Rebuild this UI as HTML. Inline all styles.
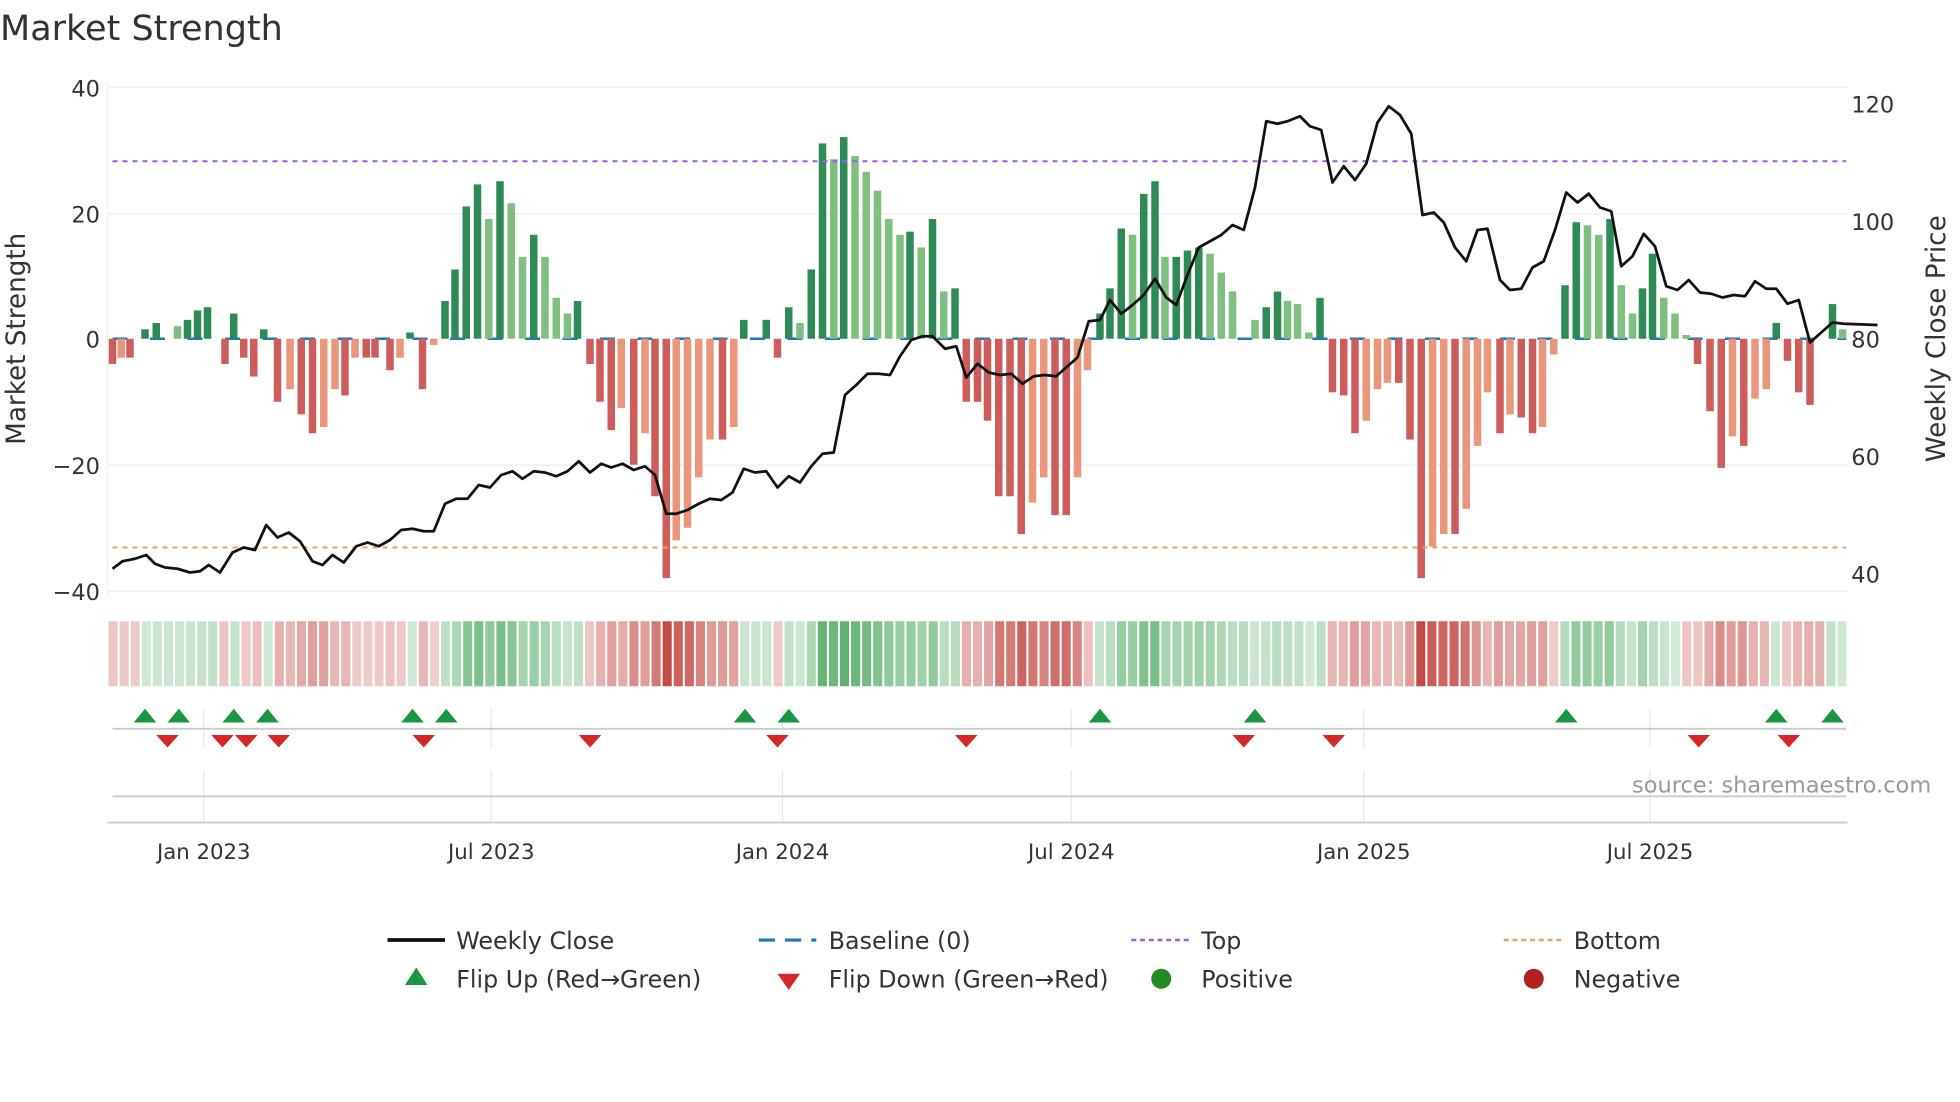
<!DOCTYPE html>
<html><head><meta charset="utf-8"><style>
html,body{margin:0;padding:0;background:#fff;width:1960px;height:1102px;overflow:hidden}
svg{display:block}
text{font-family:"DejaVu Sans","Liberation Sans",sans-serif;fill:#333}
</style></head><body>
<svg id="s" width="1960" height="1102" viewBox="0 0 1568 881.6" xmlns="http://www.w3.org/2000/svg">
<text x="0" y="32" font-size="28">Market Strength</text>
<g stroke="#eee" stroke-width="1">
<line x1="86" y1="70" x2="1478" y2="70"/><line x1="86" y1="171" x2="1478" y2="171"/>
<line x1="86" y1="372" x2="1478" y2="372"/><line x1="86" y1="473" x2="1478" y2="473"/>
<line x1="86" y1="66" x2="86" y2="478"/>
</g>
<g font-size="18" text-anchor="end">
<text x="80" y="77">40</text><text x="80" y="178">20</text><text x="80" y="278">0</text>
<text x="80" y="379">−20</text><text x="80" y="480">−40</text>
</g>
<g font-size="18">
<text x="1481" y="90">120</text><text x="1481" y="184">100</text><text x="1481" y="278">80</text>
<text x="1481" y="372">60</text><text x="1481" y="466">40</text>
</g>
<text transform="translate(20,271) rotate(-90)" font-size="21" text-anchor="middle">Market Strength</text>
<text transform="translate(1556,271) rotate(-90)" font-size="21" text-anchor="middle">Weekly Close Price</text>
<line x1="90" y1="271" x2="1477" y2="271" stroke="#1f77b4" stroke-width="2" stroke-dasharray="12,18"/>
<g id="bars"></g>
<line x1="90" y1="129" x2="1477" y2="129" stroke="#9b5de5" stroke-width="1.6" stroke-dasharray="4,4"/>
<line x1="90" y1="438" x2="1477" y2="438" stroke="#f0a060" stroke-width="1.6" stroke-dasharray="4,4"/>
<polyline id="line" fill="none" stroke="#111" stroke-width="2.2" stroke-linejoin="round"/>
<g id="heat"></g>
<g stroke="#e6e6e6" stroke-width="1">
<line x1="163" y1="567" x2="163" y2="598"/><line x1="393" y1="567" x2="393" y2="598"/><line x1="626" y1="567" x2="626" y2="598"/><line x1="857" y1="567" x2="857" y2="598"/><line x1="1091" y1="567" x2="1091" y2="598"/><line x1="1320" y1="567" x2="1320" y2="598"/>
<line x1="163" y1="616" x2="163" y2="658"/><line x1="393" y1="616" x2="393" y2="658"/><line x1="626" y1="616" x2="626" y2="658"/><line x1="857" y1="616" x2="857" y2="658"/><line x1="1091" y1="616" x2="1091" y2="658"/><line x1="1320" y1="616" x2="1320" y2="658"/>
</g>
<line x1="90" y1="583" x2="1477" y2="583" stroke="#ccc" stroke-width="1.5"/>
<line x1="90" y1="637" x2="1477" y2="637" stroke="#ccc" stroke-width="1.5"/>
<line x1="86" y1="658" x2="1478" y2="658" stroke="#ccc" stroke-width="1.5"/>
<g id="tri"></g>
<text x="1545" y="634" font-size="18" text-anchor="end" style="fill:#999">source: sharemaestro.com</text>
<g font-size="17" text-anchor="middle">
<text x="163" y="687">Jan 2023</text><text x="393" y="687">Jul 2023</text><text x="626" y="687">Jan 2024</text>
<text x="857" y="687">Jul 2024</text><text x="1091" y="687">Jan 2025</text><text x="1320" y="687">Jul 2025</text>
</g>
<g font-size="19">
<line x1="310" y1="752" x2="356" y2="752" stroke="#111" stroke-width="3"/><text x="365" y="759">Weekly Close</text>
<line x1="607" y1="752" x2="653" y2="752" stroke="#1f77b4" stroke-width="2.5" stroke-dasharray="13,8"/><text x="663" y="759">Baseline (0)</text>
<line x1="905" y1="752" x2="951" y2="752" stroke="#9b5de5" stroke-width="2" stroke-dasharray="4,3"/><text x="961" y="759">Top</text>
<line x1="1203" y1="752" x2="1249" y2="752" stroke="#f0a060" stroke-width="2" stroke-dasharray="4,3"/><text x="1259" y="759">Bottom</text>
<polygon points="333,774 324,788 342,788" fill="#1a9641"/><text x="365" y="790">Flip Up (Red→Green)</text>
<polygon points="622,779 640,779 631,792" fill="#d62728"/><text x="663" y="790">Flip Down (Green→Red)</text>
<circle cx="929" cy="783" r="8" fill="#228b22"/><text x="961" y="790">Positive</text>
<circle cx="1227" cy="783" r="8" fill="#b22222"/><text x="1259" y="790">Negative</text>
</g>
</svg>
<script>
var NS="http://www.w3.org/2000/svg";
function el(t,a,p){var e=document.createElementNS(NS,t);for(var k in a)e.setAttribute(k,a[k]);document.getElementById(p).appendChild(e);return e;}
var B=[[90,-4],[97,-3],[104,-3],[116,1.5],[125,2.5],[142,2],[150,3],[158,4.5],[166,5],[180,-4],[187,4],[195,-3],[203,-6],[211,1.5],[222,-10],[232,-8],[241,-12],[250,-15],[259,-14],[268,-8],[276,-9],[284,-3],[293,-3],[300,-3],[312,-5],[320,-3],[328,1],[338,-8],[347,-1],[356,6],[364,11],[373,21],[382,24.5],[391,19],[400,25],[409,21.5],[418,13],[427,16.5],[436,13],[445,6.5],[454,4],[462,6],[472,-4],[480,-10],[489,-14.5],[497,-11],[507,-20],[516,-15],[524,-25],[533,-38],[541,-32],[550,-30],[559,-22],[568,-16],[578,-16],[587,-14],[595,3],[613,3],[622,-3],[631,5],[640,2.5],[649,11],[658,31],[667,28.5],[675,32],[684,29],[693,26.5],[702,23.5],[711,19],[720,16.5],[728,17],[737,14.5],[746,19],[755,7.5],[764,8],[773,-10],[782,-10],[790,-13],[799,-25],[808,-25],[817,-31],[826,-26],[835,-22],[844,-28],[853,-28],[862,-22],[870,-5],[880,4],[888,8],[897,17.5],[906,16.5],[915,23],[924,25],[932,13],[941,13],[950,14],[959,14.5],[968,13.5],[977,10.5],[986,7.5],[1004,3],[1013,5],[1022,7.5],[1030,6],[1038,5.5],[1047,1],[1056,6.5],[1066,-8.5],[1075,-9],[1084,-15],[1093,-13],[1102,-8],[1110,-7],[1119,-7],[1128,-16],[1137,-38],[1146,-33],[1155,-31],[1164,-31],[1173,-27],[1182,-17],[1190,-8.5],[1200,-15],[1208,-12],[1217,-12.5],[1226,-15],[1234,-14],[1243,-2.5],[1252,8.5],[1261,18.5],[1270,18],[1279,16.5],[1288,19],[1297,8.5],[1306,4],[1314,8],[1322,13.5],[1331,6.5],[1340,4],[1349,0.6],[1358,-4],[1368,-11.5],[1377,-20.5],[1386,-15.5],[1395,-17],[1404,-9.5],[1413,-8],[1421,2.5],[1430,-3.5],[1439,-8.5],[1448,-10.5],[1466,5.5],[1474,1.5]];
var prev=0;
B.forEach(function(b){var v=b[1],h=Math.abs(v)*5.04,dark=Math.abs(v)>=Math.abs(prev)||(v*prev<=0);
var c=v>0?(dark?"#2e8b57":"#7fbf7f"):(dark?"#cd5c5c":"#e9967a");
el("rect",{x:b[0]-3,y:v>0?271-h:271,width:6,height:h,fill:c},"bars");prev=v;});
var vals={};B.forEach(function(b){vals[Math.round((b[0]-90)/8.9)]=b[1];});
var n=157,w=1392/n,last=0;
for(var i=0;i<n;i++){var v=(i in vals)?vals[i]:last;last=v;var a=0.22+Math.min(Math.abs(v)/38,1)*0.7;
var col=v>=0?"rgba(60,160,80,"+a+")":"rgba(190,60,55,"+a+")";
el("rect",{x:86+i*w+0.8,y:497,width:w-1.6,height:52,fill:col},"heat");}
var L=[[90,455],[98,449],[108,447],[117,444],[124,451],[132,454],[142,455],[152,458],[160,457],[167,452],[176,458],[186,442],[195,438],[204,440],[213,420],[222,430],[231,426],[240,433],[250,449],[258,452],[266,444],[275,450],[285,437],[294,434],[303,437],[312,432],[321,424],[330,423],[339,425],[347,425],[356,403],[365,399],[374,399],[383,388],[392,390],[401,380],[410,377],[418,383],[427,377],[436,378],[445,381],[454,377],[463,369],[472,378],[481,371],[489,374],[498,371],[507,376],[516,373],[524,380],[533,411],[541,411],[550,408],[559,403],[568,399],[577,400],[586,394],[595,375],[604,378],[613,377],[622,390],[631,381],[640,386],[649,373],[658,363],[667,362],[676,316],[685,308],[694,299],[703,299],[712,300],[720,285],[729,272],[738,269],[746,269],[756,279],[765,277],[773,302],[782,291],[791,298],[800,300],[809,299],[818,307],[827,301],[836,300],[845,301],[854,293],[862,286],[871,257],[880,256],[888,240],[897,251],[906,244],[915,236],[924,223],[933,238],[941,244],[950,220],[959,198],[968,193],[977,188],[986,180],[995,184],[1004,150],[1013,97],[1022,99],[1030,97],[1040,93],[1048,101],[1057,104],[1066,146],[1075,133],[1084,144],[1093,131],[1102,98],[1111,85],[1120,92],[1129,107],[1138,172],[1147,170],[1155,178],[1164,198],[1173,209],[1182,184],[1190,183],[1200,224],[1208,232],[1217,231],[1226,214],[1235,209],[1244,184],[1253,154],[1262,162],[1271,155],[1280,166],[1289,169],[1297,213],[1306,205],[1315,187],[1324,197],[1333,229],[1342,232],[1351,224],[1360,234],[1369,235],[1378,238],[1387,236],[1396,237],[1404,225],[1413,231],[1421,231],[1430,243],[1439,240],[1448,274],[1457,266],[1466,258],[1475,259],[1502,260]];
document.getElementById("line").setAttribute("points",L.map(function(p){return p.join(",")}).join(" "));
[116,143,187,214,330,357,596,631,880,1004,1253,1421,1466].forEach(function(x){el("polygon",{points:(x)+",567 "+(x-9)+",578 "+(x+9)+",578",fill:"#1a9641"},"tri");});
[134,178,197,223,339,472,622,773,995,1067,1359,1431].forEach(function(x){el("polygon",{points:(x-9)+",588 "+(x+9)+",588 "+x+",598",fill:"#d62728"},"tri");});
</script>
</body></html>
